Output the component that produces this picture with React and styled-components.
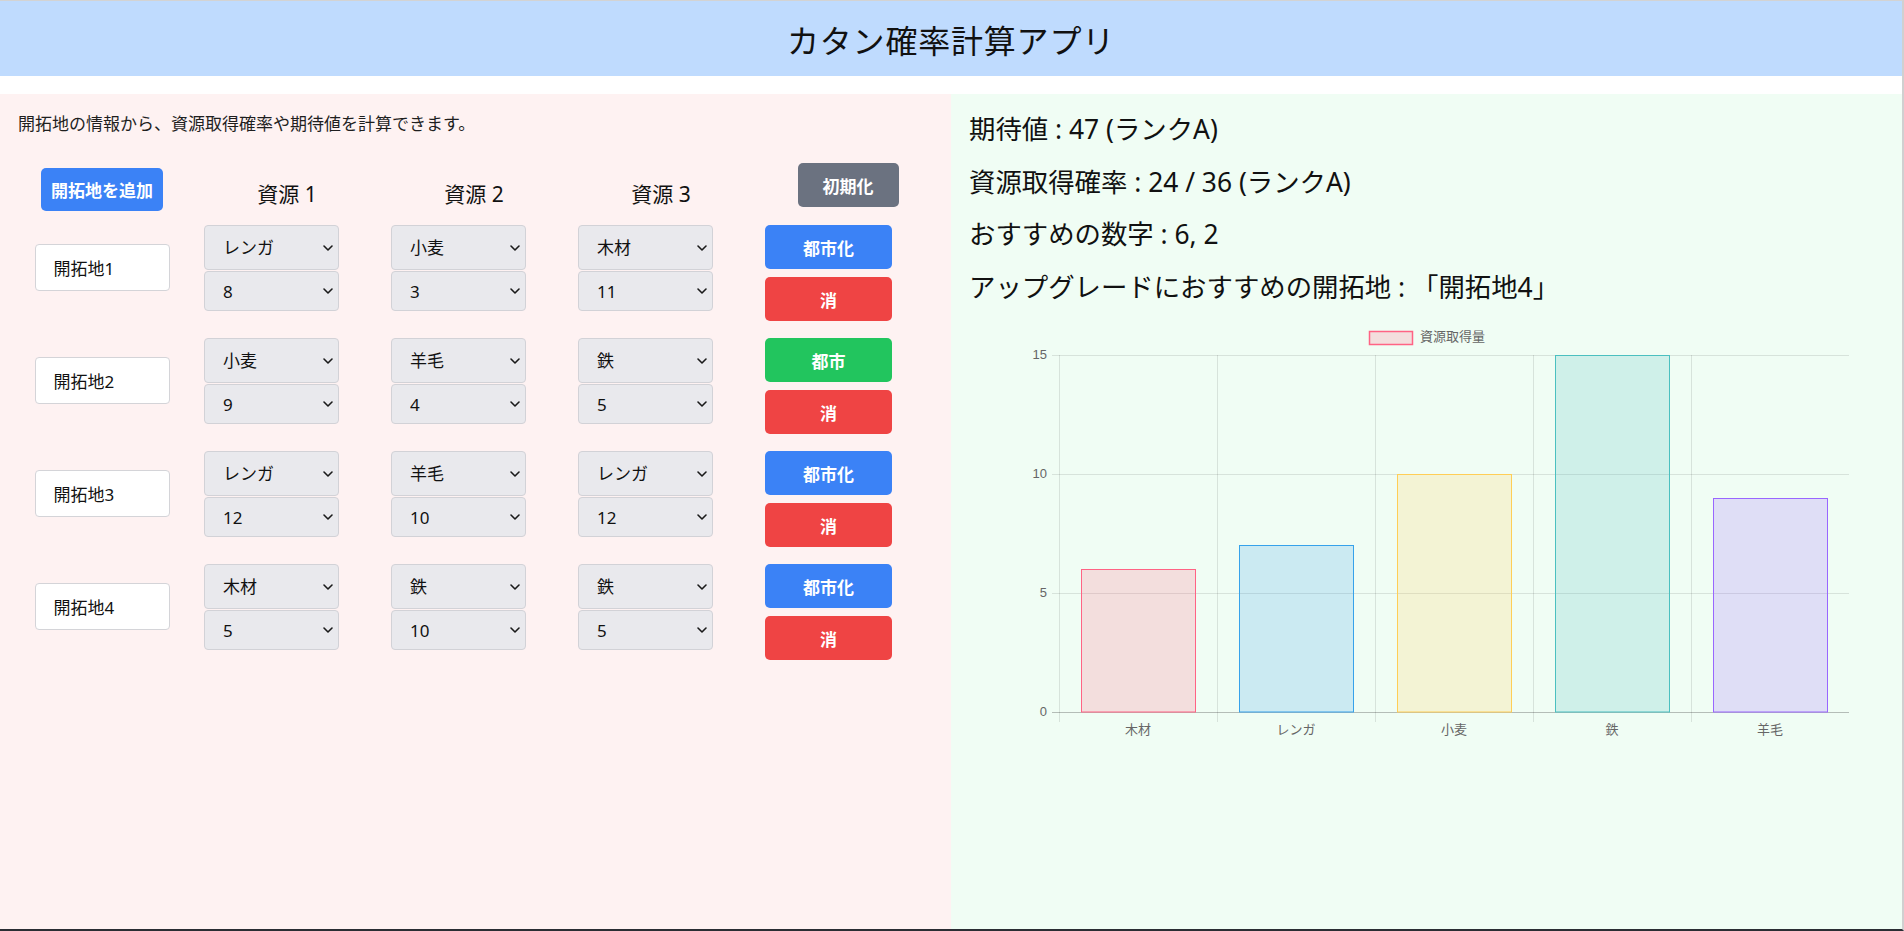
import React from "react";
import styled, { createGlobalStyle } from "styled-components";
import { ChevronDown } from "lucide-react";

const GlobalStyle = createGlobalStyle`
  html, body { margin: 0; padding: 0; background: #ffffff; }
  body {
    font-family: "Noto Sans", "Noto Sans CJK JP", sans-serif;
    color: #111111;
  }
  * { box-sizing: border-box; }
`;

const Page = styled.div`
  height: 931px;
  border-top: 1px solid #d3d3d3;
  border-right: 2px solid #d0d0d0;
  border-bottom: 2px solid #2a2d33;
  display: flex;
  flex-direction: column;
  overflow: hidden;
`;

const Header = styled.header`
  height: 75px;
  background: #bfdbfe;
  display: flex;
  align-items: center;
  justify-content: center;
  margin-bottom: 18px;
  flex: none;
`;

const Title = styled.h1`
  margin: 0;
  font-size: 32px;
  font-weight: 400;
  letter-spacing: 0.8px;
  color: #111;
`;

const Main = styled.main`
  flex: 1;
  display: grid;
  grid-template-columns: minmax(0, 1fr) minmax(0, 1fr);
  min-height: 0;
`;

const LeftPanel = styled.section`
  background: #fef2f2;
  padding: 17px 18px;
  overflow: hidden;
`;

const RightPanel = styled.section`
  background: #f0fdf4;
  padding: 17px 18px;
  overflow: hidden;
`;

const Description = styled.p`
  margin: 0 0 26px;
  font-size: 17px;
  line-height: 26px;
  color: #1f1f1f;
`;

const Sheet = styled.div`
  display: flex;
  flex-direction: column;
  gap: 17px;
  margin-left: -5px;
`;

const columns = `178px repeat(4, 182px)`;

const HeaderRow = styled.div`
  display: grid;
  grid-template-columns: ${columns};
  column-gap: 5px;
  height: 48px;
  align-items: center;
  margin-bottom: -3px;
`;

const SettlementRow = styled.div`
  display: grid;
  grid-template-columns: ${columns};
  column-gap: 5px;
  align-items: start;
`;

const SolidButton = styled.button`
  border: none;
  border-radius: 5px;
  color: #ffffff;
  font-family: inherit;
  font-size: 17px;
  font-weight: 700;
  cursor: pointer;
  background: ${(p) => p.$bg};
  width: ${(p) => p.$w}px;
  height: ${(p) => p.$h}px;
  padding: 0;
`;

const AddButton = styled(SolidButton)`
  justify-self: center;
  align-self: end;
`;

const ResetButton = styled(SolidButton)`
  justify-self: center;
  align-self: start;
`;

const ColumnTitle = styled.div`
  justify-self: center;
  margin-top: 12px;
  font-size: 21px;
  font-weight: 400;
  color: #111;
`;

const NameInput = styled.input`
  justify-self: center;
  margin-top: 19px;
  width: 135px;
  height: 47px;
  background: #ffffff;
  border: 1px solid #d4d4d8;
  border-radius: 4px;
  padding: 0 0 0 18px;
  font-family: inherit;
  font-size: 17px;
  color: #111;
  outline: none;
`;

const Stack = styled.div`
  display: flex;
  flex-direction: column;
  padding-left: 8px;
  gap: ${(p) => p.$gap}px;
`;

const SelectWrap = styled.div`
  position: relative;
  width: 135px;
  height: ${(p) => p.$h}px;

  svg {
    position: absolute;
    right: 3px;
    top: 50%;
    transform: translateY(-50%);
    pointer-events: none;
    color: #1a1a1a;
  }
`;

const Select = styled.select`
  appearance: none;
  -webkit-appearance: none;
  width: 100%;
  height: 100%;
  background-color: #e9e9ed;
  border: 1px solid #d2d2d7;
  border-radius: 4px;
  padding: 0 22px 0 18px;
  font-family: inherit;
  font-size: 17px;
  color: #111;
`;

const Stat = styled.p`
  margin: 0 0 16.5px;
  font-size: 26.4px;
  line-height: 36px;
  color: #111;
`;

const ChartBox = styled.div`
  width: 100%;
  height: 458px;
`;

const resources = ["木材", "レンガ", "小麦", "鉄", "羊毛"];
const numbers = ["2", "3", "4", "5", "6", "8", "9", "10", "11", "12"];

const settlements = [
  { name: "開拓地1", res: [["レンガ", "8"], ["小麦", "3"], ["木材", "11"]], city: false },
  { name: "開拓地2", res: [["小麦", "9"], ["羊毛", "4"], ["鉄", "5"]], city: true },
  { name: "開拓地3", res: [["レンガ", "12"], ["羊毛", "10"], ["レンガ", "12"]], city: false },
  { name: "開拓地4", res: [["木材", "5"], ["鉄", "10"], ["鉄", "5"]], city: false },
];

const chartData = [
  { label: "木材", value: 6, fill: "rgba(255,99,132,0.2)", stroke: "rgb(255,99,132)" },
  { label: "レンガ", value: 7, fill: "rgba(54,162,235,0.2)", stroke: "rgb(54,162,235)" },
  { label: "小麦", value: 10, fill: "rgba(255,206,86,0.2)", stroke: "rgb(255,206,86)" },
  { label: "鉄", value: 15, fill: "rgba(75,192,192,0.2)", stroke: "rgb(75,192,192)" },
  { label: "羊毛", value: 9, fill: "rgba(153,102,255,0.2)", stroke: "rgb(153,102,255)" },
];

function Dropdown({ h, value, options }) {
  return (
    <SelectWrap $h={h}>
      <Select defaultValue={value}>
        {options.map((o) => (
          <option key={o} value={o}>{o}</option>
        ))}
      </Select>
      <ChevronDown size={16} strokeWidth={2.4} />
    </SelectWrap>
  );
}

function BarChart() {
  const L = 90;
  const R = 880;
  const T = 34;
  const B = 391;
  const unit = (B - T) / 15;
  const cat = (R - L) / 5;
  const barW = cat * 0.72;
  const font = '"Liberation Sans", "Noto Sans CJK JP", sans-serif';
  return (
    <svg width="100%" height="100%" viewBox="0 0 915 458">
      <rect x="400.5" y="10.5" width="43" height="13" fill="rgba(255,99,132,0.2)" stroke="rgb(255,99,132)" strokeWidth="1.5" />
      <text x="451" y="17" dominantBaseline="middle" fontSize="13" fill="#666" fontFamily={font}>
        資源取得量
      </text>
      {[0, 5, 10, 15].map((v) => {
        const y = Math.round(B - v * unit) + 0.5;
        return (
          <g key={v}>
            <line x1={L - 7} x2={R} y1={y} y2={y} stroke={v === 0 ? "rgba(0,0,0,0.25)" : "rgba(0,0,0,0.1)"} strokeWidth="1" />
            <text x={L - 12} y={y} textAnchor="end" dominantBaseline="middle" fontSize="13" fill="#666" fontFamily={font}>
              {v}
            </text>
          </g>
        );
      })}
      {[0, 1, 2, 3, 4].map((i) => {
        const x = Math.round(L + i * cat) + 0.5;
        return <line key={i} x1={x} x2={x} y1={T} y2={B + 10} stroke="rgba(0,0,0,0.1)" strokeWidth="1" />;
      })}
      {chartData.map((d, i) => {
        const cx = L + cat * i + cat / 2;
        const x = Math.round(cx - barW / 2) + 0.5;
        const y = Math.round(B - d.value * unit) + 0.5;
        return (
          <g key={d.label}>
            <rect x={x} y={y} width={Math.round(barW)} height={B - y} fill={d.fill} stroke={d.stroke} strokeWidth="1" />
            <text x={cx} y={410} textAnchor="middle" dominantBaseline="middle" fontSize="13" fill="#666" fontFamily={font}>
              {d.label}
            </text>
          </g>
        );
      })}
    </svg>
  );
}

export default function App() {
  return (
    <>
      <GlobalStyle />
      <Page>
        <Header>
          <Title>カタン確率計算アプリ</Title>
        </Header>
        <Main>
          <LeftPanel>
            <Description>開拓地の情報から、資源取得確率や期待値を計算できます。</Description>
            <Sheet>
              <HeaderRow>
                <AddButton $bg="#3b82f6" $w={122} $h={43}>開拓地を追加</AddButton>
                <ColumnTitle>資源 1</ColumnTitle>
                <ColumnTitle>資源 2</ColumnTitle>
                <ColumnTitle>資源 3</ColumnTitle>
                <ResetButton $bg="#6b7280" $w={101} $h={44}>初期化</ResetButton>
              </HeaderRow>
              {settlements.map((s) => (
                <SettlementRow key={s.name}>
                  <NameInput defaultValue={s.name} />
                  {s.res.map(([r, n], i) => (
                    <Stack key={i} $gap={1}>
                      <Dropdown h={45} value={r} options={resources} />
                      <Dropdown h={40} value={n} options={numbers} />
                    </Stack>
                  ))}
                  <Stack $gap={8}>
                    {s.city ? (
                      <SolidButton $bg="#22c55e" $w={127} $h={44}>都市</SolidButton>
                    ) : (
                      <SolidButton $bg="#3b82f6" $w={127} $h={44}>都市化</SolidButton>
                    )}
                    <SolidButton $bg="#ef4444" $w={127} $h={44}>消</SolidButton>
                  </Stack>
                </SettlementRow>
              ))}
            </Sheet>
          </LeftPanel>
          <RightPanel>
            <Stat>期待値 : 47 (ランクA)</Stat>
            <Stat>資源取得確率 : 24 / 36 (ランクA)</Stat>
            <Stat>おすすめの数字 : 6, 2</Stat>
            <Stat>アップグレードにおすすめの開拓地 : 「開拓地4」</Stat>
            <ChartBox>
              <BarChart />
            </ChartBox>
          </RightPanel>
        </Main>
      </Page>
    </>
  );
}
